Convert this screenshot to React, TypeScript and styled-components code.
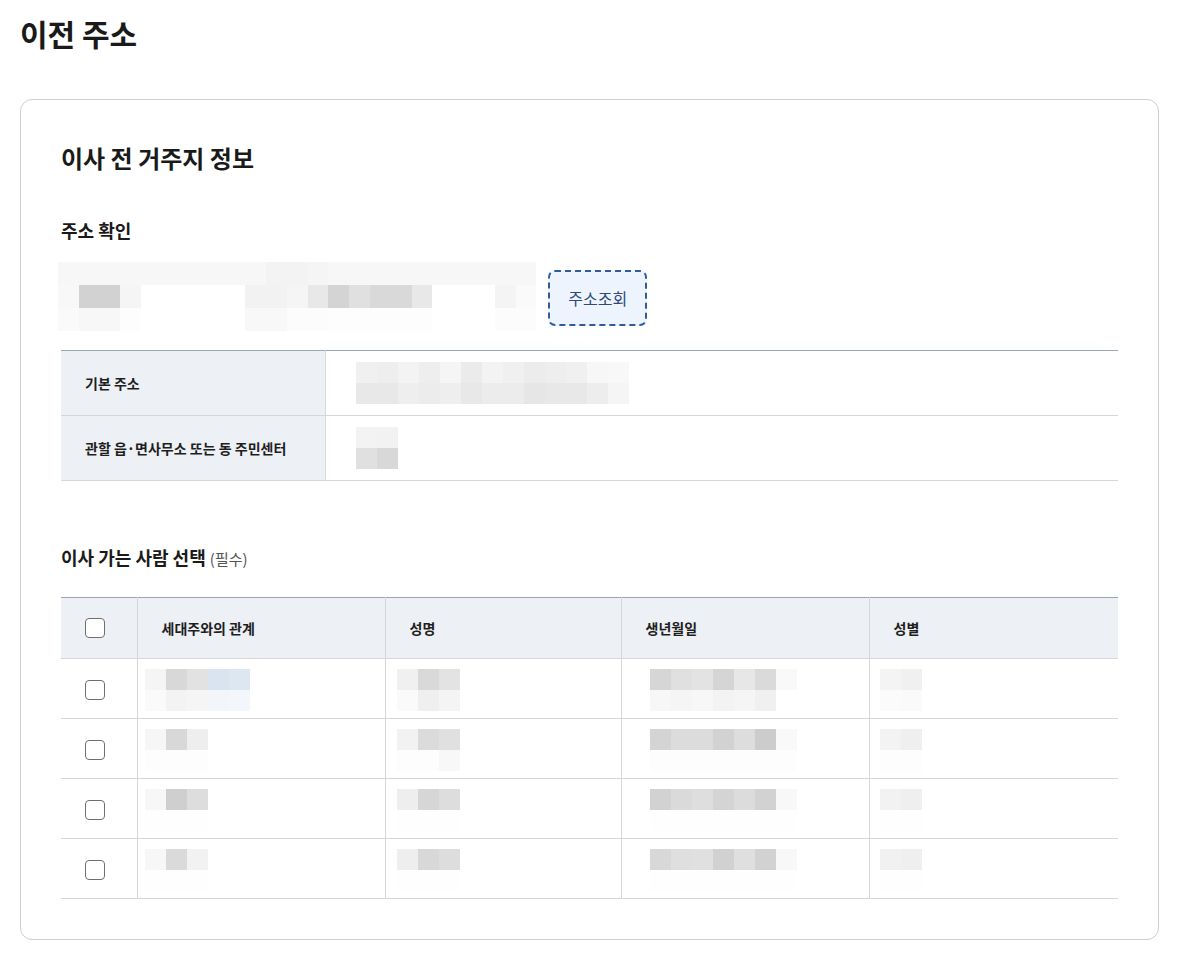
import React from 'react'
import styled, { createGlobalStyle } from 'styled-components'

const GlobalStyle = createGlobalStyle`
  * { box-sizing: border-box; }
  body {
    margin: 0;
    background: #ffffff;
    color: #1e1e1e;
    font-family: "Noto Sans CJK KR", "Noto Sans", sans-serif;
  }
`

// redacted data is drawn as a mosaic: each token is a grey level ("d8") or a full colour
type MosaicRows = string[]

const toColor = (t: string) => (t.length === 2 ? `#${t}${t}${t}` : t)

function Mosaic({ rows, w = 21, h = 21 }: { rows: MosaicRows; w?: number; h?: number }) {
  const grid = rows.map((r) => r.split(' '))
  const cols = Math.max(...grid.map((r) => r.length))
  return (
    <MosaicGrid $cols={cols} $w={w} $h={h}>
      {grid.map((r, i) =>
        Array.from({ length: cols }).map((_, j) => (
          <MosaicCell key={`${i}-${j}`} style={{ background: toColor(r[j] ?? 'ff') }} />
        )),
      )}
    </MosaicGrid>
  )
}

const addressRows: MosaicRows = [
  'f7 f7 f7 f7 f7 f7 f7 f7 f7 f7 f3 f3 f5 f7 f7 f7 f7 f7 f7 f7 f7 f7 f7',
  'f8 d2 d2 f5 ff ff ff ff ff f2 f2 f5 e8 d4 e0 d9 d9 e8 ff ff ff f4 fa',
  'fa f7 f7 fd ff ff ff ff ff f8 f8 fc fc fd fd fd fd fd ff ff ff fc fc',
]

const baseAddressRows: MosaicRows = [
  'f0 ee f3 ee f5 eb f3 f0 ec ee f0 f7 f8',
  'e8 e8 ee ec ee e8 ec ec e6 e8 e8 ed f5',
]

const centerRows: MosaicRows = ['f3 f2', 'e0 d8']

type Person = { rel: MosaicRows; name: MosaicRows; birth: MosaicRows; sex: MosaicRows }

const people: Person[] = [
  {
    rel: ['f5 d8 e2 #d9e4f0 #dde7f1', 'fa f3 f5 #f2f6fa #f3f6fa'],
    name: ['f0 d9 e3', 'fa ef f4'],
    birth: ['d6 e0 e3 d5 e7 da f9', 'f7 f5 f7 f3 f5 f0 ff'],
    sex: ['f4 f0', 'fb fa'],
  },
  {
    rel: ['f6 d8 ee', 'fd fd fd'],
    name: ['f2 db e0', 'fd fd f8'],
    birth: ['d4 dc dc d2 dd cc f9', 'fd fd fd fd fd fd fd'],
    sex: ['f3 ef', 'fd fd'],
  },
  {
    rel: ['f7 cf dd', 'fe fe fe'],
    name: ['ee d6 dd', 'fe fe fe'],
    birth: ['d2 da de d4 dc d2 f8', 'fe fe fe fe fe fe fe'],
    sex: ['f2 ef', 'fe fe'],
  },
  {
    rel: ['f7 da f2', 'fe fe fe'],
    name: ['ee d8 dd', 'fe fe fe'],
    birth: ['d8 df e0 d1 df d2 f8', 'fe fe fe fe fe fe fe'],
    sex: ['f1 ef', 'fe fe'],
  },
]

export default function App() {
  return (
    <Page>
      <GlobalStyle />
      <PageTitle>이전 주소</PageTitle>
      <Card>
        <CardTitle>이사 전 거주지 정보</CardTitle>

        <SectionTitle>주소 확인</SectionTitle>
        <AddressRow>
          <Mosaic rows={addressRows} w={20.8} h={23} />
          <SearchButton type="button">주소조회</SearchButton>
        </AddressRow>

        <InfoTable>
          <tbody>
            <tr>
              <InfoLabel>기본 주소</InfoLabel>
              <InfoValue $top>
                <Mosaic rows={baseAddressRows} />
              </InfoValue>
            </tr>
            <tr>
              <InfoLabel>관할 읍·면사무소 또는 동 주민센터</InfoLabel>
              <InfoValue>
                <Mosaic rows={centerRows} />
              </InfoValue>
            </tr>
          </tbody>
        </InfoTable>

        <SectionTitle $spaced>
          이사 가는 사람 선택 <Required>(필수)</Required>
        </SectionTitle>

        <PeopleTable>
          <colgroup>
            <col style={{ width: 76 }} />
            <col style={{ width: 248 }} />
            <col style={{ width: 236 }} />
            <col style={{ width: 248 }} />
            <col />
          </colgroup>
          <thead>
            <tr>
              <HeadCell>
                <Check />
              </HeadCell>
              <HeadCell>세대주와의 관계</HeadCell>
              <HeadCell>성명</HeadCell>
              <HeadCell>생년월일</HeadCell>
              <HeadCell>성별</HeadCell>
            </tr>
          </thead>
          <tbody>
            {people.map((p, i) => (
              <tr key={i}>
                <BodyCell $pad={24}>
                  <Check />
                </BodyCell>
                <BodyCell $pad={7}>
                  <Mosaic rows={p.rel} />
                </BodyCell>
                <BodyCell $pad={11}>
                  <Mosaic rows={p.name} />
                </BodyCell>
                <BodyCell $pad={28}>
                  <Mosaic rows={p.birth} />
                </BodyCell>
                <BodyCell $pad={10}>
                  <Mosaic rows={p.sex} />
                </BodyCell>
              </tr>
            ))}
          </tbody>
        </PeopleTable>
      </Card>
    </Page>
  )
}

const Page = styled.div`
  padding: 12px 20px 16px;
`

const PageTitle = styled.h1`
  margin: 0 0 45px;
  font-size: 30px;
  line-height: 42px;
  font-weight: 700;
  color: #1a1a1a;
`

const Card = styled.section`
  border: 1px solid #cfcfcf;
  border-radius: 12px;
  padding: 40px;
`

const CardTitle = styled.h2`
  margin: 0 0 40px;
  font-size: 24px;
  line-height: 36px;
  font-weight: 700;
  color: #1a1a1a;
`

const SectionTitle = styled.h3<{ $spaced?: boolean }>`
  margin: ${(p) => (p.$spaced ? '62px 0 24px' : '0 0 18px')};
  font-size: 18px;
  line-height: 28px;
  font-weight: 700;
  color: #1a1a1a;
`

const Required = styled.span`
  font-size: 15px;
  font-weight: 400;
  color: #555555;
`

const AddressRow = styled.div`
  display: flex;
  align-items: center;
  gap: 12px;
  margin-left: -3px;
  margin-bottom: 19px;
`

const SearchButton = styled.button`
  height: 56px;
  margin-top: 2px;
  padding: 0 18px;
  border: 2px dashed #2f5d9c;
  border-radius: 7px;
  background: #eef4fd;
  color: #2b4a78;
  font-family: inherit;
  font-size: 16px;
  cursor: pointer;
`

const MosaicGrid = styled.div<{ $cols: number; $w: number; $h: number }>`
  display: grid;
  grid-template-columns: repeat(${(p) => p.$cols}, ${(p) => p.$w}px);
  grid-auto-rows: ${(p) => p.$h}px;
`

const MosaicCell = styled.span`
  display: block;
`

const InfoTable = styled.table`
  width: 100%;
  border-collapse: collapse;
  border-top: 1px solid #9aa6b2;
`

const InfoLabel = styled.th`
  width: 264px;
  height: 65px;
  padding: 0 24px;
  background: #edf0f5;
  border-bottom: 1px solid #d6d6d6;
  border-right: 1px solid #d6d6d6;
  text-align: left;
  font-size: 14px;
  font-weight: 700;
  color: #1e1e1e;
`

const InfoValue = styled.td<{ $top?: boolean }>`
  padding: ${(p) => (p.$top ? '11px 30px 0' : '0 30px')};
  vertical-align: ${(p) => (p.$top ? 'top' : 'middle')};
  border-bottom: 1px solid #d6d6d6;
`

const PeopleTable = styled.table`
  width: 100%;
  table-layout: fixed;
  border-collapse: collapse;
  border-top: 1px solid #9aa6b2;
`

const HeadCell = styled.th`
  height: 61px;
  padding: 0 24px;
  background: #edf0f5;
  border-bottom: 1px solid #d6d6d6;
  border-left: 1px solid #d6d6d6;
  text-align: left;
  font-size: 14px;
  font-weight: 700;
  color: #1e1e1e;
  &:first-child { border-left: none; }
`

const BodyCell = styled.td<{ $pad: number }>`
  height: 60px;
  padding: 3px ${(p) => p.$pad}px 0;
  border-bottom: 1px solid #d6d6d6;
  border-left: 1px solid #d6d6d6;
  &:first-child { border-left: none; }
`

const Check = styled.span`
  display: block;
  width: 20px;
  height: 20px;
  border: 1px solid #6f6f6f;
  border-radius: 4px;
  background: #ffffff;
`
